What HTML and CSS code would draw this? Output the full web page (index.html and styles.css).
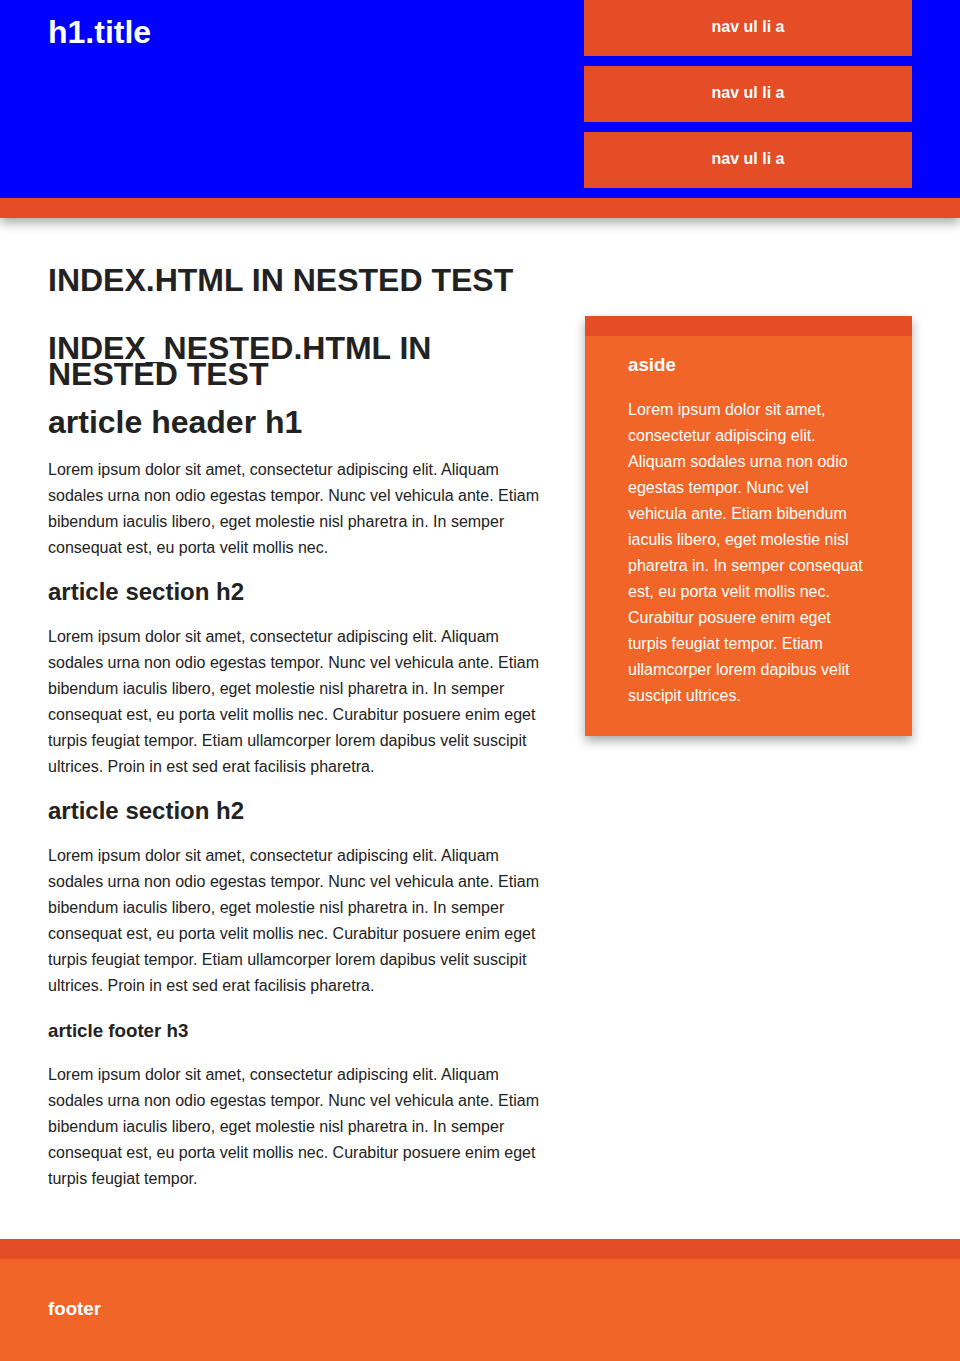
FILE: index.html
```html
<!DOCTYPE html>
<html lang="en">
<head>
<meta charset="utf-8">
<title>INDEX_NESTED.HTML IN NESTED TEST</title>
<link rel="stylesheet" href="styles.css">
</head>
<body>
<div class="header-container">
  <header class="wrapper header">
    <h1 class="title">h1.title</h1>
    <nav class="nav">
      <ul class="nav-list">
        <li><a class="nav-link" href="#">nav ul li a</a></li>
        <li><a class="nav-link" href="#">nav ul li a</a></li>
        <li><a class="nav-link" href="#">nav ul li a</a></li>
      </ul>
    </nav>
  </header>
</div>

<div class="main-container">
  <div class="wrapper">
    <h1 class="page-title">INDEX.HTML IN NESTED TEST</h1>
    <div class="main">
      <article class="article">
        <h1 class="article-h1">INDEX_NESTED.HTML IN NESTED TEST</h1>
        <header>
          <h1 class="article-h1">article header h1</h1>
          <p class="text">Lorem ipsum dolor sit amet, consectetur adipiscing elit. Aliquam sodales urna non odio egestas tempor. Nunc vel vehicula ante. Etiam bibendum iaculis libero, eget molestie nisl pharetra in. In semper consequat est, eu porta velit mollis nec.</p>
        </header>
        <section>
          <h2 class="article-h2">article section h2</h2>
          <p class="text">Lorem ipsum dolor sit amet, consectetur adipiscing elit. Aliquam sodales urna non odio egestas tempor. Nunc vel vehicula ante. Etiam bibendum iaculis libero, eget molestie nisl pharetra in. In semper consequat est, eu porta velit mollis nec. Curabitur posuere enim eget turpis feugiat tempor. Etiam ullamcorper lorem dapibus velit suscipit ultrices. Proin in est sed erat facilisis pharetra.</p>
        </section>
        <section>
          <h2 class="article-h2">article section h2</h2>
          <p class="text">Lorem ipsum dolor sit amet, consectetur adipiscing elit. Aliquam sodales urna non odio egestas tempor. Nunc vel vehicula ante. Etiam bibendum iaculis libero, eget molestie nisl pharetra in. In semper consequat est, eu porta velit mollis nec. Curabitur posuere enim eget turpis feugiat tempor. Etiam ullamcorper lorem dapibus velit suscipit ultrices. Proin in est sed erat facilisis pharetra.</p>
        </section>
        <footer>
          <h3 class="article-h3">article footer h3</h3>
          <p class="text">Lorem ipsum dolor sit amet, consectetur adipiscing elit. Aliquam sodales urna non odio egestas tempor. Nunc vel vehicula ante. Etiam bibendum iaculis libero, eget molestie nisl pharetra in. In semper consequat est, eu porta velit mollis nec. Curabitur posuere enim eget turpis feugiat tempor.</p>
        </footer>
      </article>

      <aside class="aside">
        <h3 class="aside-title">aside</h3>
        <p class="text">Lorem ipsum dolor sit amet, consectetur adipiscing elit. Aliquam sodales urna non odio egestas tempor. Nunc vel vehicula ante. Etiam bibendum iaculis libero, eget molestie nisl pharetra in. In semper consequat est, eu porta velit mollis nec. Curabitur posuere enim eget turpis feugiat tempor. Etiam ullamcorper lorem dapibus velit suscipit ultrices.</p>
      </aside>
    </div>
  </div>
</div>

<div class="footer-container">
  <footer class="wrapper footer">
    <h3 class="footer-title">footer</h3>
  </footer>
</div>
</body>
</html>
```

FILE: styles.css
```css
html, body {
  margin: 0;
  padding: 0;
}

body {
  font-family: "Liberation Sans", Arial, Helvetica, sans-serif;
  font-size: 16px;
  line-height: 26px;
  color: #222;
  background: #fff;
}

.wrapper {
  width: 864px;
  margin: 0 48px;
}

/* header */
.header-container {
  background: #0000ff;
  border-bottom: 20px solid #e44d26;
  box-shadow: 0 5px 10px #aaa;
  position: relative;
  z-index: 1;
}

.header {
  display: flex;
  justify-content: space-between;
  align-items: flex-start;
}

.title {
  margin: 19px 0 0;
  font-size: 32px;
  font-weight: bold;
  color: #fff;
}

.nav {
  width: 328px;
}

.nav-list {
  margin: 0;
  padding: 0;
  list-style: none;
}

.nav-link {
  display: block;
  margin-bottom: 10px;
  padding: 14px 0 16px;
  text-align: center;
  text-decoration: none;
  font-weight: bold;
  color: #fff;
  background: #e44d26;
}

/* main */
.main-container {
  padding: 30px 0 31px;
}

.page-title {
  margin: 19px 0 23px;
  font-size: 32px;
  font-weight: bold;
}

.main {
  display: flex;
  justify-content: space-between;
  align-items: flex-start;
}

.article {
  width: 493px;
}

.article-h1 {
  margin: 19px 0 22px;
  font-size: 32px;
  font-weight: bold;
}

.article-h2 {
  margin: 17.5px 0 19.5px;
  font-size: 24px;
  font-weight: bold;
}

.article-h3 {
  margin: 18.5px 0;
  font-size: 18.72px;
  font-weight: bold;
}

.text {
  margin: 16px 0;
}

.aside {
  width: 241px;
  padding: 0 43px 11px;
  color: #fff;
  background: #f16529;
  border-top: 20px solid #e44d26;
  box-shadow: 0 5px 10px #aaa;
}

.aside-title {
  margin: 16px 0 18.72px;
  font-size: 18.72px;
  font-weight: bold;
}

/* footer */
.footer-container {
  background: #f16529;
  border-top: 20px solid #e44d26;
}

.footer {
  padding: 20px 0 24px;
  color: #fff;
}

.footer-title {
  margin: 16.5px 0 18.72px;
  font-size: 18.72px;
  font-weight: bold;
}
```
